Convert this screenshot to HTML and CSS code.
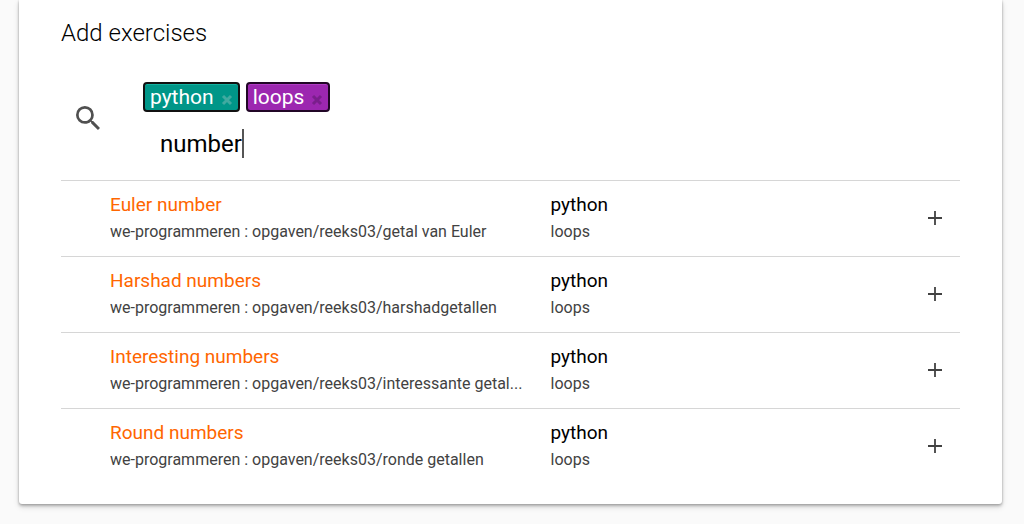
FILE: index.html
```html
<!DOCTYPE html>
<html lang="en">
<head>
<meta charset="utf-8">
<title>Add exercises</title>
<meta name="viewport" content="width=device-width, initial-scale=1">
<link rel="stylesheet" href="styles.css">
</head>
<body>
<svg class="sprite" aria-hidden="true">
  <symbol id="cross" viewBox="0 0 12 12"><path d="M2 2l8 8M10 2l-8 8" fill="none" stroke="currentColor" stroke-width="3"/></symbol>
  <symbol id="plus" viewBox="0 0 14 14"><path d="M7 0v14M0 7h14" fill="none" stroke="currentColor" stroke-width="1.8"/></symbol>
</svg>
<main class="card">
  <h2 class="card-title">Add exercises</h2>
  <div class="search">
    <label class="search-icon" for="query" aria-label="Search">
      <svg width="24" height="24" viewBox="3 3 17.5 17.5"><path fill="currentColor" d="M15.5 14h-.79l-.28-.27A6.471 6.471 0 0 0 16 9.500 6.500 6.500 0 1 0 9.500 16c1.610 0 3.090-.59 4.230-1.570l.27.28v.79l5 4.990L20.490 19l-4.990-5zm-6 0C7.010 14 5 11.990 5 9.500S7.010 5 9.500 5 14 7.010 14 9.500 11.990 14 9.500 14z"/></svg>
    </label>
    <div class="tokens">
      <span class="token token-teal">python <button class="token-remove" type="button" aria-label="Remove python"><svg width="12" height="12"><use href="#cross"/></svg></button></span>
      <span class="token token-purple">loops <button class="token-remove" type="button" aria-label="Remove loops"><svg width="12" height="12"><use href="#cross"/></svg></button></span>
      <div class="query"><input id="query" class="query-input" type="text" value="number"><span class="caret"></span></div>
    </div>
  </div>
  <table class="results">
    <colgroup><col class="col-status"><col class="col-name"><col><col class="col-add"></colgroup>
    <tbody>
      <tr><td></td><td><a class="name" href="#euler">Euler number</a><div class="path">we-programmeren : opgaven/reeks03/getal van Euler</div></td><td><div class="language">python</div><div class="path">loops</div></td><td><button class="add" type="button" aria-label="Add Euler number"><svg width="14" height="14"><use href="#plus"/></svg></button></td></tr>
      <tr><td></td><td><a class="name" href="#harshad">Harshad numbers</a><div class="path">we-programmeren : opgaven/reeks03/harshadgetallen</div></td><td><div class="language">python</div><div class="path">loops</div></td><td><button class="add" type="button" aria-label="Add Harshad numbers"><svg width="14" height="14"><use href="#plus"/></svg></button></td></tr>
      <tr><td></td><td><a class="name" href="#interesting">Interesting numbers</a><div class="path">we-programmeren : opgaven/reeks03/interessante getal...</div></td><td><div class="language">python</div><div class="path">loops</div></td><td><button class="add" type="button" aria-label="Add Interesting numbers"><svg width="14" height="14"><use href="#plus"/></svg></button></td></tr>
      <tr><td></td><td><a class="name" href="#round">Round numbers</a><div class="path">we-programmeren : opgaven/reeks03/ronde getallen</div></td><td><div class="language">python</div><div class="path">loops</div></td><td><button class="add" type="button" aria-label="Add Round numbers"><svg width="14" height="14"><use href="#plus"/></svg></button></td></tr>
    </tbody>
  </table>
</main>
</body>
</html>
```

FILE: styles.css
```css
* { box-sizing: border-box; }
body {
  margin: 0;
  background: #fafafa;
  color: #000;
  font-family: Roboto, sans-serif;
}
button { border: 0; padding: 0; background: none; cursor: pointer; }
.sprite { position: absolute; width: 0; height: 0; }
.card {
  margin: 0 22px 20px 19px;
  padding: 16px 42px 20px;
  background: #fff;
  border-radius: 0 0 3px 3px;
  box-shadow: 0 2px 3px rgba(0, 0, 0, .24), 0 3px 6px rgba(0, 0, 0, .12), 0 0 2px rgba(0, 0, 0, .2);
}
.card-title { margin: 0 0 32px; font-size: 24px; line-height: 34px; font-weight: 300; }
.search { display: flex; align-items: center; padding-bottom: 19px; }
.search-icon { display: flex; width: 82px; padding: 0 0 8px 15px; color: #505050; }
.tokens { flex: 1; display: flex; flex-wrap: wrap; column-gap: 6px; row-gap: 15px; }
.token {
  display: flex;
  align-items: center;
  gap: 7px;
  height: 30px;
  padding: 0 5px;
  border: 2px solid #111;
  border-radius: 4px;
  color: #fff;
  font-size: 21px;
  line-height: 26px;
}
.token-teal { background: #009688; box-shadow: inset 0 1px #13b09f; }
.token-purple { background: #9c27b0; border-color: #210626; box-shadow: inset 0 1px #b03cc4; }
.token-remove { display: flex; padding-top: 5px; color: #40aaa0; }
.token-purple .token-remove { color: #7a1e8c; }
.query { position: relative; flex: 1 0 100%; padding-left: 17px; }
.query-input {
  display: block;
  width: 100%;
  height: 34px;
  padding: 0;
  border: 0;
  outline: 0;
  background: none;
  color: #000;
  font: 400 24px/34px Roboto, sans-serif;
}
.caret { position: absolute; left: 99px; top: 2px; width: 2px; height: 29px; background: #555; }
.results { width: 100%; table-layout: fixed; border-collapse: collapse; }
.col-status { width: 49px; }
.col-name { width: 49%; }
.col-add { width: 50px; }
.results tr { border-top: 1px solid #d6d6d6; }
.results td { padding: 10px 0 11px; vertical-align: middle; }
.results td:nth-child(2) { padding-right: 20px; }
.name, .language { display: block; font-size: 19px; line-height: 28px; }
.name { color: #f60; text-decoration: none; }
.path {
  overflow: hidden;
  color: #424242;
  font-size: 16px;
  line-height: 26px;
  text-overflow: ellipsis;
  white-space: nowrap;
}
.add { display: flex; margin-left: auto; margin-right: 18px; color: #424242; }
```
